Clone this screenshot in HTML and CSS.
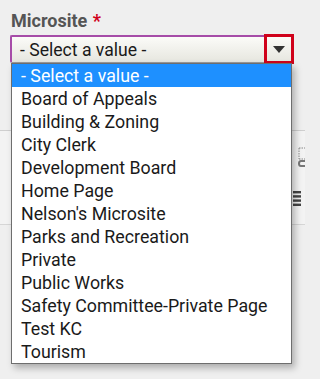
FILE: index.html
```html
<!DOCTYPE html>
<html>
<head>
<meta charset="utf-8">
<link rel="stylesheet" href="styles.css">
</head>
<body>
<div class="page">
  <div class="field">
    <div class="label">Microsite <span class="req">*</span></div>
    <div class="select-wrap">
      <div class="select">
        <span class="select-text">- Select a value -</span>
        <span class="arrow-box"><span class="arrow"></span></span>
      </div>
      <ul class="list">
        <li class="opt active">- Select a value -</li>
        <li class="opt">Board of Appeals</li>
        <li class="opt">Building &amp; Zoning</li>
        <li class="opt">City Clerk</li>
        <li class="opt">Development Board</li>
        <li class="opt">Home Page</li>
        <li class="opt">Nelson's Microsite</li>
        <li class="opt">Parks and Recreation</li>
        <li class="opt">Private</li>
        <li class="opt">Public Works</li>
        <li class="opt">Safety Committee-Private Page</li>
        <li class="opt">Test KC</li>
        <li class="opt">Tourism</li>
      </ul>
    </div>
  </div>
  <div class="toolbar">
    <div class="tools">
      <svg class="tool-dash" width="10" height="20" viewBox="0 0 10 20">
        <path d="M4 1h6M4 1v11M4 12h6" fill="none" stroke="#888" stroke-width="1" stroke-dasharray="1.5 1"/>
        <path d="M10 14H6q-2 0-2 2.5T6 19h4" fill="none" stroke="#777" stroke-width="2"/>
      </svg>
      <svg class="tool-lines" width="8" height="16" viewBox="0 0 8 16">
        <rect x="0" y="0" width="8" height="2.4" fill="#444"/>
        <rect x="0" y="4.2" width="8" height="2.4" fill="#444"/>
        <rect x="0" y="8.4" width="8" height="2.4" fill="#444"/>
        <rect x="0" y="12.6" width="8" height="2.4" fill="#444"/>
      </svg>
    </div>
  </div>
</div>
</body>
</html>
```

FILE: styles.css
```css
html, body {
  margin: 0;
  padding: 0;
}
body {
  background: #efefef;
  font-family: Roboto, "Liberation Sans", Arial, sans-serif;
  width: 305px;
  height: 379px;
  overflow: hidden;
}
.page {
  position: relative;
  height: 379px;
}
.field {
  padding: 10px 13px 0 10px;
}
.label {
  font-weight: bold;
  font-size: 18px;
  line-height: 22px;
  color: #555;
  padding-left: 1px;
}
.req {
  color: #d0021b;
  margin-left: 1px;
}
.select-wrap {
  position: relative;
  margin-top: 3px;
  width: 282px;
}
.select {
  position: relative;
  box-sizing: border-box;
  height: 28px;
  border-top: 2px solid #a64ca8;
  border-left: 2px solid #a64ca8;
  border-right: 1px solid #b9b9b9;
  border-bottom: 1px solid #9a9a9a;
  border-radius: 2px;
  background: linear-gradient(#fbfbf8, #e6e6df);
  display: flex;
  align-items: center;
  padding-left: 8px;
  font-size: 17.6px;
  color: #1a1a1a;
}
.select-text {
  line-height: 20px;
}
.arrow-box {
  position: absolute;
  right: -3px;
  top: -3px;
  width: 30px;
  height: 30px;
  box-sizing: border-box;
  border: 3px solid #d0021b;
  display: flex;
  align-items: center;
  justify-content: center;
}
.arrow {
  width: 0;
  height: 0;
  border-left: 6px solid transparent;
  border-right: 6px solid transparent;
  border-top: 7px solid #333;
  margin-top: 1px;
}
.list {
  position: absolute;
  z-index: 2;
  left: 1px;
  top: 28px;
  width: 281px;
  box-sizing: border-box;
  margin: 0;
  padding: 0;
  list-style: none;
  background: #fff;
  border: 1px solid #6e6e6e;
  box-shadow: 3px 4px 7px rgba(0, 0, 0, 0.28);
}
.opt {
  font-size: 17.8px;
  line-height: 19px;
  padding: 2px 9px;
  height: 19px;
  color: #1a1a1a;
  white-space: nowrap;
}
.opt.active {
  background: #1e90ff;
  color: #fff;
}
.toolbar {
  margin-top: 67px;
  height: 93px;
  border-top: 1px solid #cfcfcf;
  border-bottom: 1px solid #d6d6d6;
  background: #f3f3f3;
  display: flex;
  justify-content: flex-end;
}
.tools {
  width: 12px;
  display: flex;
  flex-direction: column;
  padding-top: 16px;
  gap: 24px;
}
.tool-dash {
  margin-left: 2px;
}
.tool-lines {
  margin-left: 0;
}
```
